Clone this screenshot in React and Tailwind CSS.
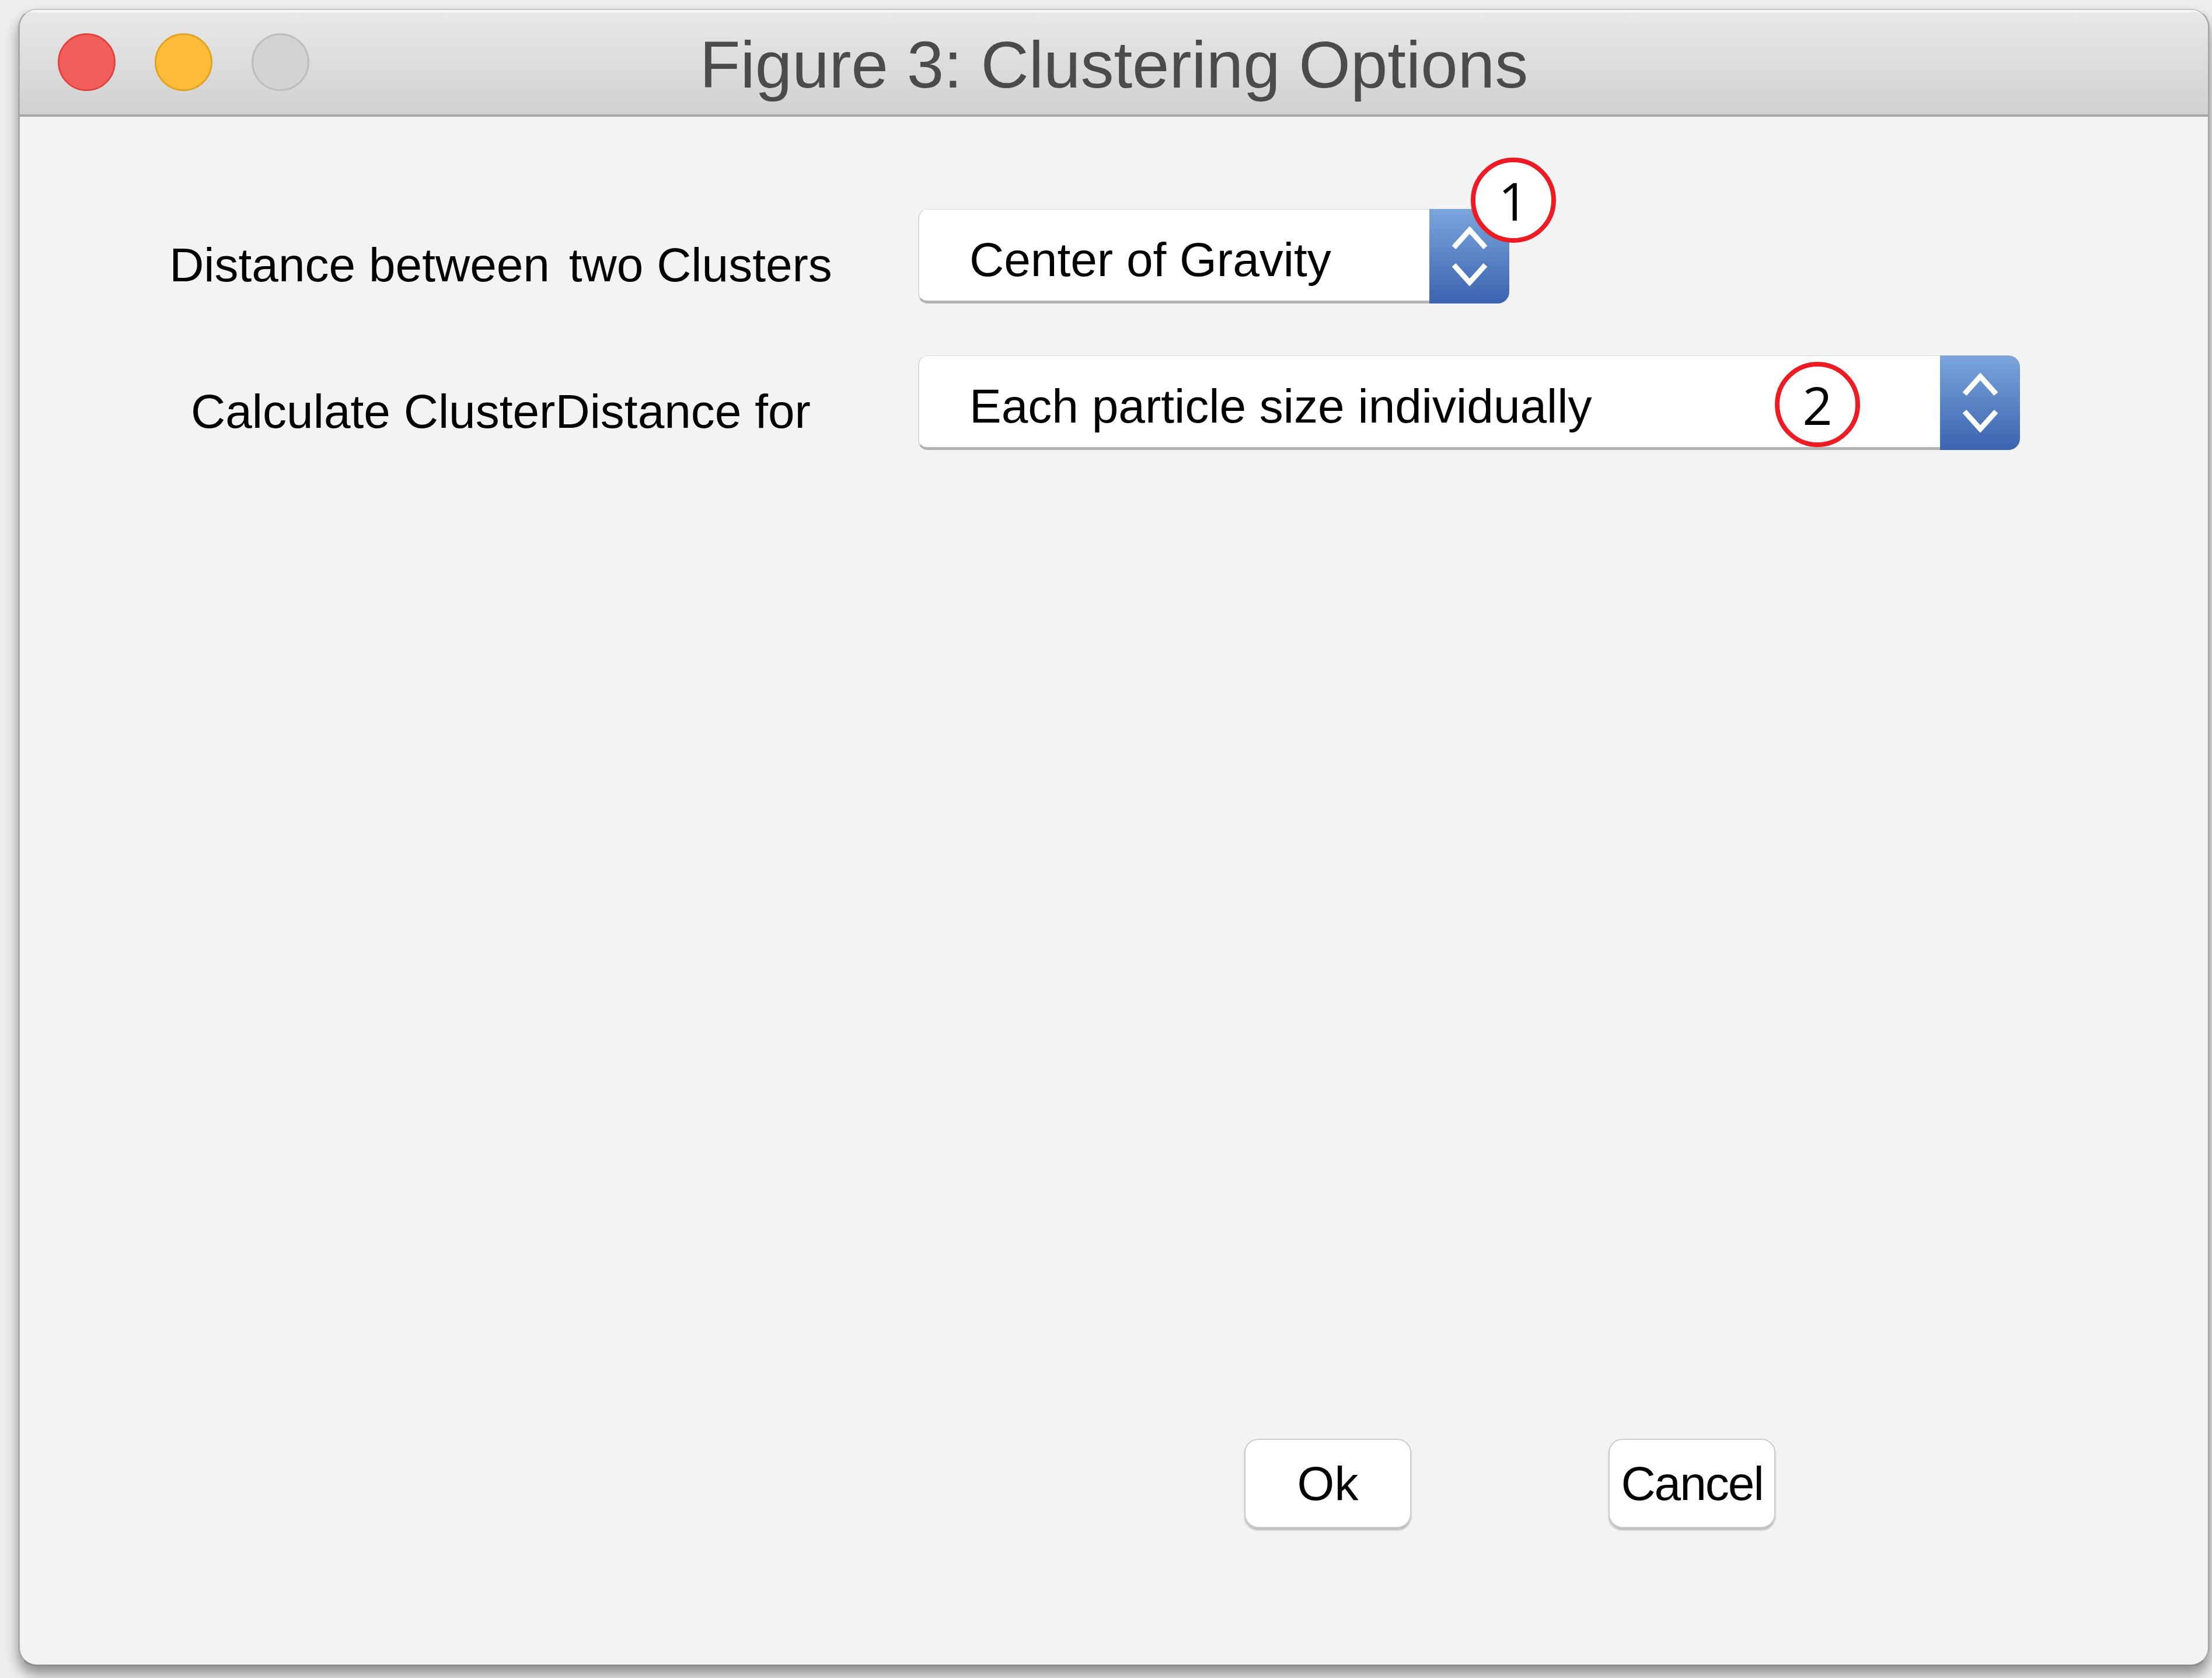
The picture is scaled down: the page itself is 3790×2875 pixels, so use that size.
import React from 'react'

const ui = { fontFamily: '"Liberation Sans", Arial, sans-serif' }

function Chevrons() {
  return (
    <svg width="64" height="102" viewBox="0 0 64 102" fill="none" stroke="#ffffff" strokeWidth="9">
      <polyline points="5,36 32,6 59,36" />
      <polyline points="5,66 32,96 59,66" />
    </svg>
  )
}

function Marker({ n, className }) {
  return (
    <div className={'absolute w-[146px] h-[146px] rounded-full border-[8px] border-[#ed1c24] bg-white flex items-center justify-center ' + className}>
      <span className="text-[90px] leading-none text-black" style={{ fontFamily: '"Open Sans", "Liberation Sans", sans-serif' }}>{n}</span>
    </div>
  )
}

function Dropdown({ value, width, marker }) {
  return (
    <div className={'relative flex h-[162px] ' + width}>
      <div className="flex-1 bg-white rounded-l-[16px] border-l-2 border-t border-[#dadada] border-b-[5px] border-b-[#b4b4b4]">
        <div className="pl-[86px] pt-[45px] text-[82px] leading-none text-black">{value}</div>
      </div>
      <div className="w-[137px] rounded-r-[20px] bg-gradient-to-b from-[#7ba5db] to-[#3c63b0] flex items-center justify-center">
        <Chevrons />
      </div>
      {marker}
    </div>
  )
}

function Light({ cls }) {
  return <div className={'w-[99px] h-[99px] rounded-full border-[3px] ' + cls} />
}

export default function App() {
  return (
    <div className="w-[3790px] h-[2875px] overflow-hidden bg-[#eeeeee] pl-[31px] pt-[15px]" style={ui}>
      <div className="w-[3755px] h-[2840px] flex flex-col rounded-[32px] border-x-[3px] border-t-2 border-b-[3px] border-x-[#a9a9a9] border-t-[#c4c4c4] border-b-[#8e8e8e] bg-[#f3f3f3] overflow-hidden shadow-[0_14px_22px_rgba(0,0,0,0.4)]">
        <div className="h-[183px] shrink-0 grid grid-cols-[1fr_auto_1fr] items-center bg-gradient-to-b from-[#e9e9e9] to-[#d1d1d1] border-b-[4px] border-[#a8a8a8] shadow-[inset_0_4px_0_#f6f6f6]">
          <div className="flex items-center gap-[67px] pl-[65px]">
            <Light cls="bg-[#f25f5a] border-[#e3433e]" />
            <Light cls="bg-[#febc38] border-[#e0a325]" />
            <Light cls="bg-[#d3d3d3] border-[#bdbdbd]" />
          </div>
          <div className="text-[114px] leading-none text-[#4b4b4b] pt-[8px]">Figure 3: Clustering Options</div>
          <div />
        </div>

        <div className="flex-1 flex flex-col">
          <div className="flex items-start pt-[158px] pl-[109px]">
            <div className="w-[1430px] text-center text-[82px] leading-none text-black mt-[55px]">
              Distance between <span className="inline-block w-[10px]" />two Clusters
            </div>
            <Dropdown
              value="Center of Gravity"
              width="w-[1013px]"
              marker={<Marker n="1" className="left-[947px] top-[-88px]" />}
            />
          </div>
          <div className="flex items-start pt-[89px] pl-[109px]">
            <div className="w-[1430px] text-center text-[82px] leading-none text-black mt-[55px]">Calculate ClusterDistance for</div>
            <Dropdown
              value="Each particle size individually"
              width="w-[1888px]"
              marker={<Marker n="2" className="left-[1468px] top-[11px]" />}
            />
          </div>

          <div className="mt-auto flex gap-[338px] pl-[2098px] pb-[234px]">
            <button className="w-[286px] h-[153px] flex items-center justify-center bg-white rounded-[24px] border-2 border-[#cdcdcd] shadow-[0_4px_3px_rgba(0,0,0,0.22)] text-[82px] leading-none text-black">Ok</button>
            <button className="w-[286px] h-[153px] flex items-center justify-center bg-white rounded-[24px] border-2 border-[#cdcdcd] shadow-[0_4px_3px_rgba(0,0,0,0.22)] text-[82px] leading-none text-black tracking-[-2px]">Cancel</button>
          </div>
        </div>
      </div>
    </div>
  )
}
